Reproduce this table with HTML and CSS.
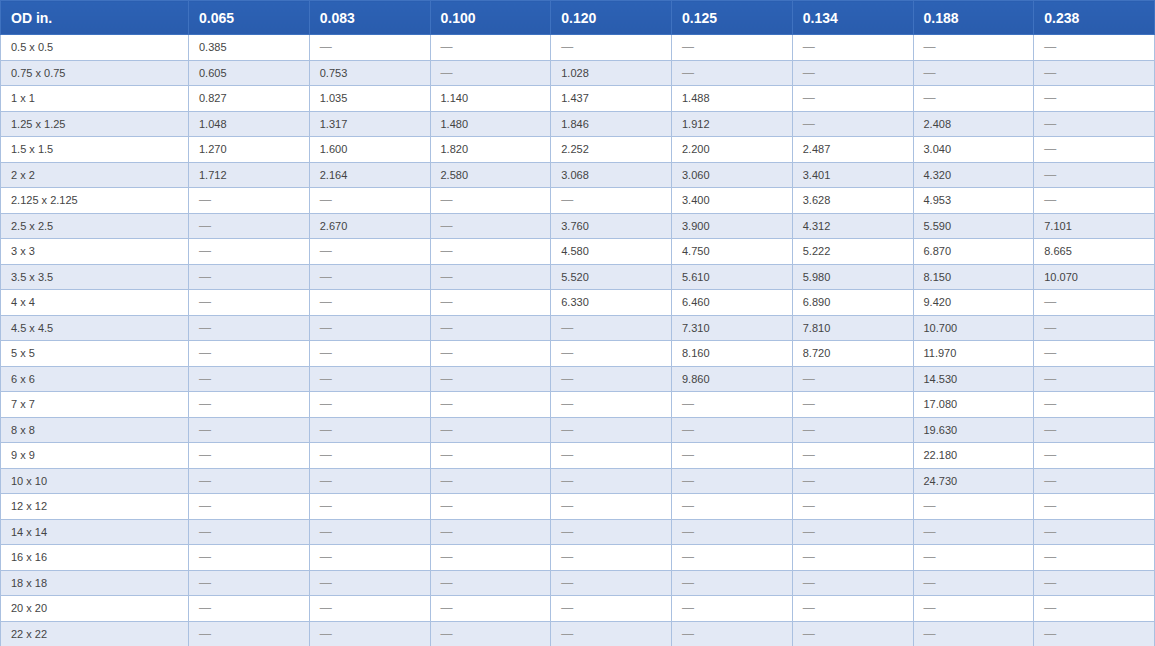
FILE: index.html
```html
<!DOCTYPE html>
<html>
<head>
<meta charset="utf-8">
<link rel="stylesheet" href="styles.css">
</head>
<body>
<table class="spec">
<colgroup><col class="c-od"><col><col><col><col><col><col><col><col></colgroup>
<thead>
<tr><th>OD in.</th><th>0.065</th><th>0.083</th><th>0.100</th><th>0.120</th><th>0.125</th><th>0.134</th><th>0.188</th><th>0.238</th></tr>
</thead>
<tbody>
<tr><td>0.5 x 0.5</td><td>0.385</td><td class="na">—</td><td class="na">—</td><td class="na">—</td><td class="na">—</td><td class="na">—</td><td class="na">—</td><td class="na">—</td></tr>
<tr><td>0.75 x 0.75</td><td>0.605</td><td>0.753</td><td class="na">—</td><td>1.028</td><td class="na">—</td><td class="na">—</td><td class="na">—</td><td class="na">—</td></tr>
<tr><td>1 x 1</td><td>0.827</td><td>1.035</td><td>1.140</td><td>1.437</td><td>1.488</td><td class="na">—</td><td class="na">—</td><td class="na">—</td></tr>
<tr><td>1.25 x 1.25</td><td>1.048</td><td>1.317</td><td>1.480</td><td>1.846</td><td>1.912</td><td class="na">—</td><td>2.408</td><td class="na">—</td></tr>
<tr><td>1.5 x 1.5</td><td>1.270</td><td>1.600</td><td>1.820</td><td>2.252</td><td>2.200</td><td>2.487</td><td>3.040</td><td class="na">—</td></tr>
<tr><td>2 x 2</td><td>1.712</td><td>2.164</td><td>2.580</td><td>3.068</td><td>3.060</td><td>3.401</td><td>4.320</td><td class="na">—</td></tr>
<tr><td>2.125 x 2.125</td><td class="na">—</td><td class="na">—</td><td class="na">—</td><td class="na">—</td><td>3.400</td><td>3.628</td><td>4.953</td><td class="na">—</td></tr>
<tr><td>2.5 x 2.5</td><td class="na">—</td><td>2.670</td><td class="na">—</td><td>3.760</td><td>3.900</td><td>4.312</td><td>5.590</td><td>7.101</td></tr>
<tr><td>3 x 3</td><td class="na">—</td><td class="na">—</td><td class="na">—</td><td>4.580</td><td>4.750</td><td>5.222</td><td>6.870</td><td>8.665</td></tr>
<tr><td>3.5 x 3.5</td><td class="na">—</td><td class="na">—</td><td class="na">—</td><td>5.520</td><td>5.610</td><td>5.980</td><td>8.150</td><td>10.070</td></tr>
<tr><td>4 x 4</td><td class="na">—</td><td class="na">—</td><td class="na">—</td><td>6.330</td><td>6.460</td><td>6.890</td><td>9.420</td><td class="na">—</td></tr>
<tr><td>4.5 x 4.5</td><td class="na">—</td><td class="na">—</td><td class="na">—</td><td class="na">—</td><td>7.310</td><td>7.810</td><td>10.700</td><td class="na">—</td></tr>
<tr><td>5 x 5</td><td class="na">—</td><td class="na">—</td><td class="na">—</td><td class="na">—</td><td>8.160</td><td>8.720</td><td>11.970</td><td class="na">—</td></tr>
<tr><td>6 x 6</td><td class="na">—</td><td class="na">—</td><td class="na">—</td><td class="na">—</td><td>9.860</td><td class="na">—</td><td>14.530</td><td class="na">—</td></tr>
<tr><td>7 x 7</td><td class="na">—</td><td class="na">—</td><td class="na">—</td><td class="na">—</td><td class="na">—</td><td class="na">—</td><td>17.080</td><td class="na">—</td></tr>
<tr><td>8 x 8</td><td class="na">—</td><td class="na">—</td><td class="na">—</td><td class="na">—</td><td class="na">—</td><td class="na">—</td><td>19.630</td><td class="na">—</td></tr>
<tr><td>9 x 9</td><td class="na">—</td><td class="na">—</td><td class="na">—</td><td class="na">—</td><td class="na">—</td><td class="na">—</td><td>22.180</td><td class="na">—</td></tr>
<tr><td>10 x 10</td><td class="na">—</td><td class="na">—</td><td class="na">—</td><td class="na">—</td><td class="na">—</td><td class="na">—</td><td>24.730</td><td class="na">—</td></tr>
<tr><td>12 x 12</td><td class="na">—</td><td class="na">—</td><td class="na">—</td><td class="na">—</td><td class="na">—</td><td class="na">—</td><td class="na">—</td><td class="na">—</td></tr>
<tr><td>14 x 14</td><td class="na">—</td><td class="na">—</td><td class="na">—</td><td class="na">—</td><td class="na">—</td><td class="na">—</td><td class="na">—</td><td class="na">—</td></tr>
<tr><td>16 x 16</td><td class="na">—</td><td class="na">—</td><td class="na">—</td><td class="na">—</td><td class="na">—</td><td class="na">—</td><td class="na">—</td><td class="na">—</td></tr>
<tr><td>18 x 18</td><td class="na">—</td><td class="na">—</td><td class="na">—</td><td class="na">—</td><td class="na">—</td><td class="na">—</td><td class="na">—</td><td class="na">—</td></tr>
<tr><td>20 x 20</td><td class="na">—</td><td class="na">—</td><td class="na">—</td><td class="na">—</td><td class="na">—</td><td class="na">—</td><td class="na">—</td><td class="na">—</td></tr>
<tr><td>22 x 22</td><td class="na">—</td><td class="na">—</td><td class="na">—</td><td class="na">—</td><td class="na">—</td><td class="na">—</td><td class="na">—</td><td class="na">—</td></tr>
</tbody>
</table>
</body>
</html>
```
FILE: styles.css
```css
html, body {
  margin: 0;
  padding: 0;
  background: #ffffff;
}
body {
  font-family: "Liberation Sans", Arial, sans-serif;
  overflow: hidden;
}
.spec {
  width: 1155px;
  border-collapse: collapse;
  table-layout: fixed;
}
.spec .c-od {
  width: 188px;
}
.spec th {
  background: linear-gradient(#2c62b5, #2a5cad);
  color: #ffffff;
  font-size: 14px;
  font-weight: bold;
  text-align: left;
  height: 34px;
  padding: 0 10px;
  border: 1px solid #3f72c0;
  box-sizing: border-box;
}
.spec td {
  font-size: 11px;
  color: #444444;
  text-align: left;
  padding: 0 10px;
  height: 25.5px;
  border: 1px solid #aac0e0;
  box-sizing: border-box;
}
.spec tbody tr:nth-child(even) td {
  background: #e3e9f5;
}
.spec td.na {
  color: #9a9a9a;
  font-size: 12px;
}
```
